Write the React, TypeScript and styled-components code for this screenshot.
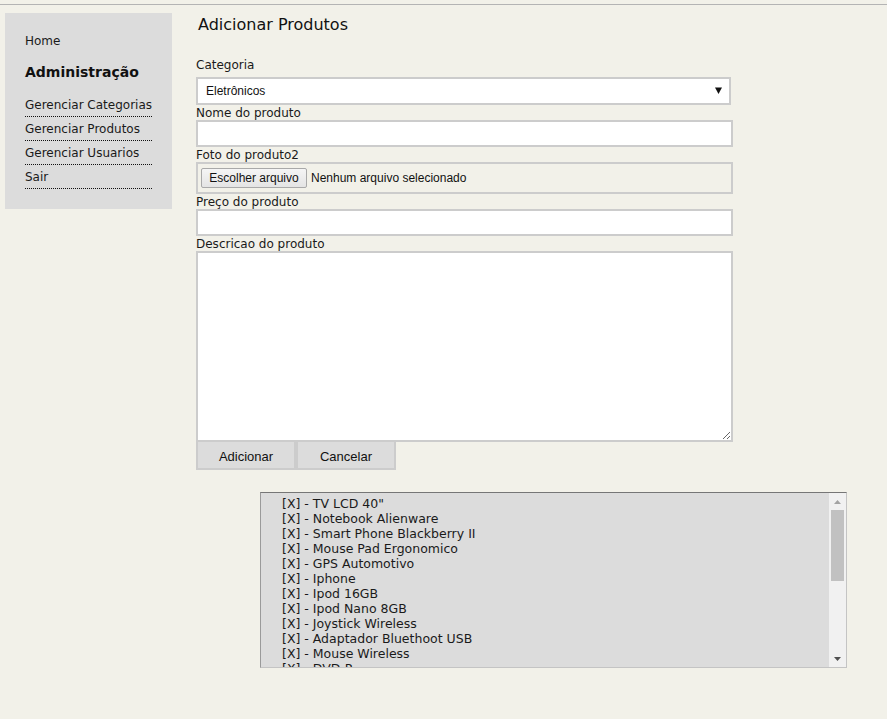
import React from "react";
import styled, { createGlobalStyle } from "styled-components";

const Global = createGlobalStyle`
  html, body { margin: 0; padding: 0; background: #f2f1e9; }
  body { font-family: "DejaVu Sans", Verdana, sans-serif; color: #1a1a1a; }
  * { box-sizing: border-box; }
`;

const Page = styled.div`
  margin-top: 4px;
  border-top: 1px solid #b4b4b4;
  display: flex;
  align-items: flex-start;
  min-height: 714px;
`;

const Sidebar = styled.nav`
  margin: 8px 0 0 5px;
  width: 167px;
  height: 196px;
  background: #dcdcdc;
  padding: 20px 20px 0 20px;
  display: flex;
  flex-direction: column;
`;

const HomeLink = styled.a`
  font-size: 12px;
  line-height: 16px;
  color: #1a1a1a;
  text-decoration: none;
`;

const SideTitle = styled.h2`
  margin: 14px 0 12px 0;
  font-size: 14px;
  line-height: 18px;
  font-weight: bold;
  color: #111;
`;

const NavList = styled.ul`
  list-style: none;
  margin: 0;
  padding: 0;
  width: 127px;
`;

const NavItem = styled.li`
  border-bottom: 1px dotted #111;
  height: 24px;
  padding-top: 4px;
  font-size: 12px;
  line-height: 17px;
  white-space: nowrap;
`;

const NavLink = styled.a`
  color: #1a1a1a;
  text-decoration: none;
`;

const Main = styled.main`
  margin-left: 24px;
  width: 651px;
  display: flex;
  flex-direction: column;
`;

const Title = styled.h1`
  margin: 9px 0 0 2px;
  font-size: 16px;
  line-height: 22px;
  font-weight: normal;
  color: #111;
`;

const Form = styled.form`
  margin-top: 21px;
  display: flex;
  flex-direction: column;
  width: 537px;
`;

const Label = styled.label<{ $first?: boolean }>`
  font-size: 12px;
  line-height: 14px;
  padding-top: 1px;
  color: #1a1a1a;
  margin-bottom: ${(p) => (p.$first ? "5px" : "0")};
`;

const SelectWrap = styled.div`
  position: relative;
  width: 535px;
`;

const Select = styled.select`
  appearance: none;
  display: block;
  width: 535px;
  height: 28px;
  border: 2px solid #cccccc;
  background: #fff;
  font-family: "Liberation Sans", Arial, sans-serif;
  font-size: 12px;
  color: #111;
  padding: 0 0 0 8px;
  outline: none;
`;

const Arrow = styled.svg`
  position: absolute;
  right: 9px;
  top: 10px;
  pointer-events: none;
`;

const TextInput = styled.input`
  display: block;
  width: 537px;
  height: 27px;
  border: 2px solid #cccccc;
  background: #fff;
  outline: none;
`;

const FileBox = styled.div`
  width: 537px;
  height: 32px;
  border: 2px solid #cccccc;
  display: flex;
  align-items: center;
  padding-left: 3px;
  gap: 4px;
  font-family: "Liberation Sans", Arial, sans-serif;
  font-size: 12px;
  color: #111;
`;

const FileButton = styled.button`
  height: 20px;
  width: 106px;
  border: 1px solid #a9a9a9;
  border-radius: 2px;
  background: linear-gradient(#f5f5f5, #e4e4e4);
  font-family: "Liberation Sans", Arial, sans-serif;
  font-size: 12px;
  color: #111;
  padding: 0;
`;

const TextArea = styled.textarea`
  display: block;
  width: 537px;
  height: 191px;
  border: 2px solid #cccccc;
  background: #fff;
  outline: none;
  resize: both;
`;

const ButtonRow = styled.div`
  display: flex;
`;

const ActionButton = styled.button`
  width: 100px;
  height: 28px;
  background: #dcdcdc;
  border: 2px solid #cccccc;
  border-top: none;
  font-family: "Liberation Sans", Arial, sans-serif;
  font-size: 13px;
  color: #111;
  padding: 2px 0 0 0;
`;

const ListBox = styled.div`
  margin: 22px 0 0 64px;
  width: 587px;
  height: 176px;
  background: #dcdcdc;
  border-top: 1px solid #767676;
  border-left: 1px solid #9a9a9a;
  border-right: 1px solid #c4c4c4;
  border-bottom: 1px solid #c4c4c4;
  display: flex;
`;

const ListContent = styled.div`
  flex: 1;
  overflow: hidden;
`;

const ScrollBar = styled.div`
  width: 17px;
  background: #f1f1f1;
  display: flex;
  flex-direction: column;
  align-items: center;
`;

const ScrollArrow = styled.div`
  height: 17px;
  width: 17px;
  display: flex;
  align-items: center;
  justify-content: center;
`;

const Thumb = styled.div`
  width: 13px;
  height: 71px;
  background: #c1c1c1;
`;

const Spacer = styled.div`
  flex: 1;
`;

const Items = styled.ul`
  list-style: none;
  margin: 0;
  padding: 3px 0 0 21px;
`;

const Item = styled.li`
  font-size: 12.5px;
  line-height: 15px;
  color: #1a1a1a;
  white-space: nowrap;
`;

const products = [
  'TV LCD 40"',
  "Notebook Alienware",
  "Smart Phone Blackberry II",
  "Mouse Pad Ergonomico",
  "GPS Automotivo",
  "Iphone",
  "Ipod 16GB",
  "Ipod Nano 8GB",
  "Joystick Wireless",
  "Adaptador Bluethoot USB",
  "Mouse Wireless",
  "DVD-R",
  "Teclado USB",
  'Monitor LCD 19"',
  "Pen Drive 4GB",
  "Webcam HD",
];

export default function App() {
  return (
    <>
      <Global />
      <Page>
        <Sidebar>
          <HomeLink href="#">Home</HomeLink>
          <SideTitle>Administração</SideTitle>
          <NavList>
            <NavItem><NavLink href="#">Gerenciar Categorias</NavLink></NavItem>
            <NavItem><NavLink href="#">Gerenciar Produtos</NavLink></NavItem>
            <NavItem><NavLink href="#">Gerenciar Usuarios</NavLink></NavItem>
            <NavItem><NavLink href="#">Sair</NavLink></NavItem>
          </NavList>
        </Sidebar>
        <Main>
          <Title>Adicionar Produtos</Title>
          <Form onSubmit={(e) => e.preventDefault()}>
            <Label $first>Categoria</Label>
            <SelectWrap>
              <Select defaultValue="ele">
                <option value="ele">Eletrônicos</option>
              </Select>
              <Arrow width="7" height="7" viewBox="0 0 7 7">
                <path d="M0 0.5 H7 L3.5 7 Z" fill="#111" />
              </Arrow>
            </SelectWrap>
            <Label>Nome do produto</Label>
            <TextInput type="text" />
            <Label>Foto do produto2</Label>
            <FileBox>
              <FileButton type="button">Escolher arquivo</FileButton>
              <span>Nenhum arquivo selecionado</span>
            </FileBox>
            <Label>Preço do produto</Label>
            <TextInput type="text" />
            <Label>Descricao do produto</Label>
            <TextArea />
            <ButtonRow>
              <ActionButton type="submit">Adicionar</ActionButton>
              <ActionButton type="button">Cancelar</ActionButton>
            </ButtonRow>
          </Form>
          <ListBox>
            <ListContent>
              <Items>
                {products.map((p) => (
                  <Item key={p}>[X] - {p}</Item>
                ))}
              </Items>
            </ListContent>
            <ScrollBar>
              <ScrollArrow>
                <svg width="7" height="4" viewBox="0 0 7 4">
                  <path d="M0 4 L3.5 0 L7 4 Z" fill="#a3a3a3" />
                </svg>
              </ScrollArrow>
              <Thumb />
              <Spacer />
              <ScrollArrow>
                <svg width="7" height="4" viewBox="0 0 7 4">
                  <path d="M0 0 L7 0 L3.5 4 Z" fill="#505050" />
                </svg>
              </ScrollArrow>
            </ScrollBar>
          </ListBox>
        </Main>
      </Page>
    </>
  );
}
